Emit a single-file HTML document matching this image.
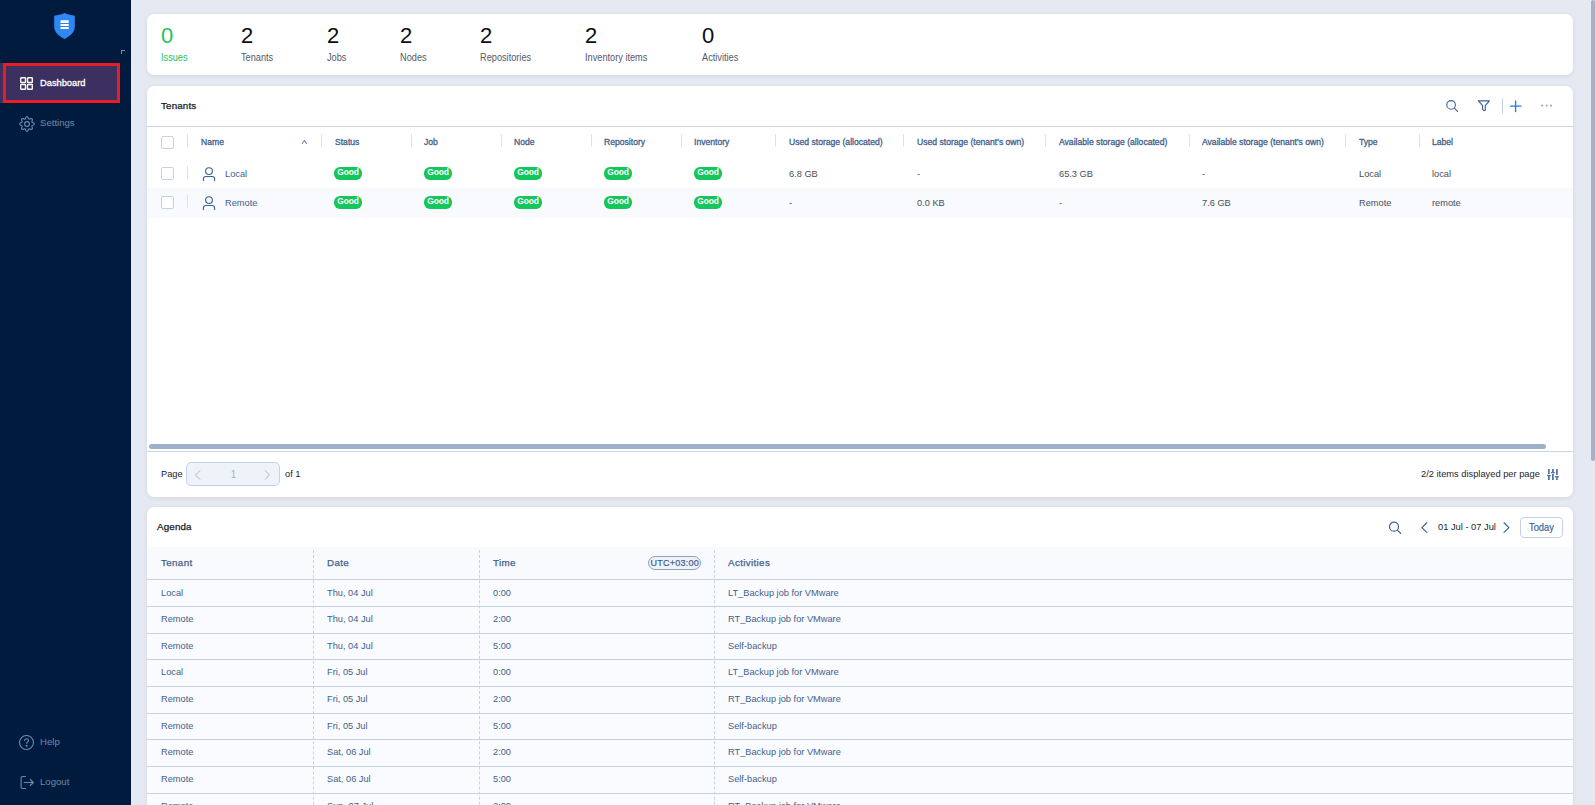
<!DOCTYPE html>
<html><head><meta charset="utf-8">
<style>
*{margin:0;padding:0;box-sizing:border-box}
html,body{width:1595px;height:805px;overflow:hidden;background:#e5e9f1;font-family:"Liberation Sans",sans-serif;position:relative}
.a{position:absolute}
.t{position:absolute;white-space:nowrap;line-height:1}
#side{left:0;top:0;width:131px;height:805px;background:#011b3f}
.card{position:absolute;background:#fff;border-radius:7px;box-shadow:0 1px 4px rgba(30,50,90,0.10)}
.num{font-size:22px;color:#0c0c12}
.lbl{font-size:10px;color:#55596a;transform:scaleX(0.92);transform-origin:0 0}
.hd{font-size:8.6px;color:#43608c;-webkit-text-stroke:0.3px #43608c}
.cell{font-size:9.6px;color:#45608a;transform:scaleX(0.963);transform-origin:0 0}
.cellg{color:#4b4d58}
.cb{position:absolute;width:13px;height:13px;border:1px solid #c6d2e4;border-radius:2px;background:#fff}
.sep{position:absolute;width:1px;height:13px;background:#dbe3ed}
.good{position:absolute;width:28px;height:13px;border-radius:6px;background:#15c65d;color:#fff;font-size:8.4px;font-weight:bold;text-align:center;line-height:11px;letter-spacing:-0.1px}
.dsep{position:absolute;width:0;border-left:1px dashed #c8d3e2}
.ttl{font-size:9.8px;letter-spacing:0.15px;color:#161622;-webkit-text-stroke:0.25px #161622}
</style></head><body>
<div id="side" class="a">
  <svg class="a" style="left:52px;top:11px" width="25" height="30" viewBox="0 0 25 30">
    <path d="M12.5 2 C15.5 3.3 19.5 4.3 22.8 4.8 L22.8 16 C22.8 21.5 17.5 25.5 12.5 28 C7.5 25.5 2.2 21.5 2.2 16 L2.2 4.8 C5.5 4.3 9.5 3.3 12.5 2 Z" fill="#2f86f5"/>
    <rect x="8.5" y="9.2" width="8.2" height="2.8" fill="#fff"/>
    <rect x="8.5" y="13" width="8.2" height="2" fill="#fff"/>
    <rect x="8.5" y="16" width="8.2" height="2" fill="#fff"/>
  </svg>
  <div class="a" style="left:121px;top:50px;width:4px;height:4px;border-top:1.8px solid #6f90c0;border-left:1.8px solid #6f90c0"></div>
  <div class="a" style="left:0;top:63px;width:120px;height:40px;background:#3c3060"></div>
  <div class="a" style="left:3px;top:63px;width:117px;height:40px;border:3px solid #ea1c24"></div>
  <svg class="a" style="left:20px;top:77px" width="13" height="13" viewBox="0 0 13 13" fill="none" stroke="#fff" stroke-width="1.4">
    <rect x="0.7" y="0.7" width="4.8" height="4.8" rx="0.6"/><rect x="7.5" y="0.7" width="4.8" height="4.8" rx="0.6"/>
    <rect x="0.7" y="7.5" width="4.8" height="4.8" rx="0.6"/><rect x="7.5" y="7.5" width="4.8" height="4.8" rx="0.6"/>
  </svg>
  <span class="t" style="left:40px;top:79px;font-size:9.3px;color:#fff;-webkit-text-stroke:0.3px #fff">Dashboard</span>
  <svg class="a" style="left:19px;top:116px" width="16" height="16" viewBox="0 0 16 16" fill="none" stroke="#6a89b3" stroke-width="1.1">
    <path d="M15.3 8.0 L15.2 8.5 L14.7 8.9 L14.2 9.2 L13.6 9.5 L13.1 9.7 L12.9 10.0 L12.9 10.4 L13.0 10.9 L13.2 11.5 L13.4 12.1 L13.4 12.7 L13.2 13.2 L12.7 13.4 L12.1 13.4 L11.5 13.2 L10.9 13.0 L10.4 12.9 L10.0 12.9 L9.7 13.1 L9.5 13.6 L9.2 14.2 L8.9 14.7 L8.5 15.2 L8.0 15.3 L7.5 15.2 L7.1 14.7 L6.8 14.2 L6.5 13.6 L6.3 13.1 L6.0 12.9 L5.6 12.9 L5.1 13.0 L4.5 13.2 L3.9 13.4 L3.3 13.4 L2.8 13.2 L2.6 12.7 L2.6 12.1 L2.8 11.5 L3.0 10.9 L3.1 10.4 L3.1 10.0 L2.9 9.7 L2.4 9.5 L1.8 9.2 L1.3 8.9 L0.8 8.5 L0.7 8.0 L0.8 7.5 L1.3 7.1 L1.8 6.8 L2.4 6.5 L2.9 6.3 L3.1 6.0 L3.1 5.6 L3.0 5.1 L2.8 4.5 L2.6 3.9 L2.6 3.3 L2.8 2.8 L3.3 2.6 L3.9 2.6 L4.5 2.8 L5.1 3.0 L5.6 3.1 L6.0 3.1 L6.3 2.9 L6.5 2.4 L6.8 1.8 L7.1 1.3 L7.5 0.8 L8.0 0.7 L8.5 0.8 L8.9 1.3 L9.2 1.8 L9.5 2.4 L9.7 2.9 L10.0 3.1 L10.4 3.1 L10.9 3.0 L11.5 2.8 L12.1 2.6 L12.7 2.6 L13.2 2.8 L13.4 3.3 L13.4 3.9 L13.2 4.5 L13.0 5.1 L12.9 5.6 L12.9 6.0 L13.1 6.3 L13.6 6.5 L14.2 6.8 L14.7 7.1 L15.2 7.5Z"/>
    <circle cx="8" cy="8" r="2.4"/>
  </svg>
  <span class="t" style="left:40px;top:118px;font-size:9.6px;color:#6f88ab">Settings</span>
  <svg class="a" style="left:19px;top:735px" width="16" height="16" viewBox="0 0 16 16" fill="none" stroke="#6a89b3" stroke-width="1.1">
    <circle cx="7.5" cy="7.5" r="7"/>
    <path d="M5.6 6 C5.6 4.6 6.5 3.8 7.6 3.8 C8.7 3.8 9.5 4.6 9.5 5.6 C9.5 6.9 7.6 7.2 7.6 8.8"/>
    <circle cx="7.6" cy="10.8" r="0.5" fill="#6a89b3"/>
  </svg>
  <span class="t" style="left:40px;top:737px;font-size:9.6px;color:#6f88ab">Help</span>
  <svg class="a" style="left:19px;top:775px" width="16" height="16" viewBox="0 0 16 16" fill="none" stroke="#6a89b3" stroke-width="1.1">
    <path d="M6.5 1.5 H3.6 Q2.1 1.5 2.1 3 V12 Q2.1 13.5 3.6 13.5 H6.5" stroke-linecap="round"/>
    <path d="M5.2 7.5 H14.3 M11.3 4.5 L14.3 7.5 L11.3 10.5" stroke-linecap="round" stroke-linejoin="round"/>
  </svg>
  <span class="t" style="left:40px;top:777px;font-size:9.6px;color:#6f88ab">Logout</span>
</div>
<div class="card" style="left:147px;top:14px;width:1426px;height:61px">
<span class="t num" style="left:14px;top:11px;color:#1fc25e">0</span>
<span class="t lbl" style="left:14px;top:38.6px;color:#1fc25e">Issues</span>
<span class="t num" style="left:94px;top:11px">2</span>
<span class="t lbl" style="left:94px;top:38.6px">Tenants</span>
<span class="t num" style="left:180px;top:11px">2</span>
<span class="t lbl" style="left:180px;top:38.6px">Jobs</span>
<span class="t num" style="left:253px;top:11px">2</span>
<span class="t lbl" style="left:253px;top:38.6px">Nodes</span>
<span class="t num" style="left:333px;top:11px">2</span>
<span class="t lbl" style="left:333px;top:38.6px">Repositories</span>
<span class="t num" style="left:438px;top:11px">2</span>
<span class="t lbl" style="left:438px;top:38.6px">Inventory items</span>
<span class="t num" style="left:555px;top:11px">0</span>
<span class="t lbl" style="left:555px;top:38.6px">Activities</span>
</div>
<div class="card" style="left:147px;top:86px;width:1426px;height:411px;overflow:hidden">
<span class="t ttl" style="left:14px;top:15px">Tenants</span>
<svg class="a" style="left:1297px;top:12px" width="120" height="18" viewBox="0 0 120 18" fill="none" stroke="#3c6298" stroke-width="1.15" stroke-linecap="round" stroke-linejoin="round">
  <circle cx="7.1" cy="6.9" r="4.3"/><path d="M10.3 10.1 L13.5 13.4"/>
  <path d="M34.4 2.8 H45.4 L41.3 7.6 V12.2 L40 12.7 L38.6 11.4 V7.6 Z"/>
  <path d="M58.5 0.5 V15.5" stroke="#c3cfdf" stroke-width="1" stroke-linecap="butt"/>
  <path d="M71.6 2.9 V13.6 M66.5 8.1 H77" stroke="#1f7bf3" stroke-width="1.35"/>
  <circle cx="98.2" cy="7.6" r="1.1" fill="#9aabc2" stroke="none"/><circle cx="102.6" cy="7.6" r="1.1" fill="#9aabc2" stroke="none"/><circle cx="107" cy="7.6" r="1.1" fill="#9aabc2" stroke="none"/>
</svg>
<div class="a" style="left:0;top:40px;width:1426px;height:1px;background:#c8d4e4"></div>
<div class="cb" style="left:14px;top:50px"></div>
<div class="sep" style="left:40px;top:48px"></div>
<div class="sep" style="left:174px;top:48px"></div>
<div class="sep" style="left:264px;top:48px"></div>
<div class="sep" style="left:354px;top:48px"></div>
<div class="sep" style="left:444px;top:48px"></div>
<div class="sep" style="left:534px;top:48px"></div>
<div class="sep" style="left:628px;top:48px"></div>
<div class="sep" style="left:756px;top:48px"></div>
<div class="sep" style="left:898px;top:48px"></div>
<div class="sep" style="left:1042px;top:48px"></div>
<div class="sep" style="left:1198px;top:48px"></div>
<div class="sep" style="left:1272px;top:48px"></div>
<span class="t hd" style="left:54px;top:52px">Name</span>
<span class="t hd" style="left:188px;top:52px">Status</span>
<span class="t hd" style="left:277px;top:52px">Job</span>
<span class="t hd" style="left:367px;top:52px">Node</span>
<span class="t hd" style="left:457px;top:52px">Repository</span>
<span class="t hd" style="left:547px;top:52px">Inventory</span>
<span class="t hd" style="left:642px;top:52px">Used storage (allocated)</span>
<span class="t hd" style="left:770px;top:52px">Used storage (tenant's own)</span>
<span class="t hd" style="left:912px;top:52px">Available storage (allocated)</span>
<span class="t hd" style="left:1055px;top:52px">Available storage (tenant's own)</span>
<span class="t hd" style="left:1212px;top:52px">Type</span>
<span class="t hd" style="left:1285px;top:52px">Label</span>
<svg class="a" style="left:154px;top:53px" width="8" height="6" viewBox="0 0 8 6" fill="none" stroke="#7d95b8" stroke-width="1.1" stroke-linecap="round" stroke-linejoin="round"><path d="M1.2 4.6 L3.4 1.3 L5.6 4.6"/></svg>
<div class="cb" style="left:14px;top:81px"></div>
<div class="sep" style="left:40px;top:80px"></div>
<svg class="a" style="left:55px;top:81px" width="14" height="15" viewBox="0 0 14 15" fill="none" stroke="#3c6298" stroke-width="1.15" stroke-linecap="round"><circle cx="7" cy="4.1" r="3.4"/><path d="M1.4 13.6 V12 Q1.4 9.5 3.9 9.5 H10.1 Q12.6 9.5 12.6 12 V13.6"/></svg>
<span class="t cell" style="left:78px;top:82.6px">Local</span>
<div class="good" style="left:187px;top:81px">Good</div>
<div class="good" style="left:277px;top:81px">Good</div>
<div class="good" style="left:367px;top:81px">Good</div>
<div class="good" style="left:457px;top:81px">Good</div>
<div class="good" style="left:547px;top:81px">Good</div>
<span class="t cell cellg" style="left:642px;top:82.6px">6.8 GB</span>
<span class="t cell cellg" style="left:770px;top:82.6px">-</span>
<span class="t cell cellg" style="left:912px;top:82.6px">65.3 GB</span>
<span class="t cell cellg" style="left:1055px;top:82.6px">-</span>
<span class="t cell cellg" style="left:1212px;top:82.6px">Local</span>
<span class="t cell cellg" style="left:1285px;top:82.6px">local</span>
<div class="a" style="left:0;top:102px;width:1426px;height:30px;background:#f8fafe"></div>
<div class="cb" style="left:14px;top:110px"></div>
<div class="sep" style="left:40px;top:109px"></div>
<svg class="a" style="left:55px;top:110px" width="14" height="15" viewBox="0 0 14 15" fill="none" stroke="#3c6298" stroke-width="1.15" stroke-linecap="round"><circle cx="7" cy="4.1" r="3.4"/><path d="M1.4 13.6 V12 Q1.4 9.5 3.9 9.5 H10.1 Q12.6 9.5 12.6 12 V13.6"/></svg>
<span class="t cell" style="left:78px;top:111.6px">Remote</span>
<div class="good" style="left:187px;top:110px">Good</div>
<div class="good" style="left:277px;top:110px">Good</div>
<div class="good" style="left:367px;top:110px">Good</div>
<div class="good" style="left:457px;top:110px">Good</div>
<div class="good" style="left:547px;top:110px">Good</div>
<span class="t cell cellg" style="left:642px;top:111.6px">-</span>
<span class="t cell cellg" style="left:770px;top:111.6px">0.0 KB</span>
<span class="t cell cellg" style="left:912px;top:111.6px">-</span>
<span class="t cell cellg" style="left:1055px;top:111.6px">7.6 GB</span>
<span class="t cell cellg" style="left:1212px;top:111.6px">Remote</span>
<span class="t cell cellg" style="left:1285px;top:111.6px">remote</span>
<div class="a" style="left:2px;top:358px;width:1397px;height:5px;background:#9fb1c9;border-radius:3px"></div>
<div class="a" style="left:0;top:365px;width:1426px;height:1px;background:#c8d4e4"></div>
<span class="t" style="left:14px;top:384px;font-size:9.3px;color:#23232f">Page</span>
<div class="a" style="left:39px;top:376px;width:94px;height:24px;border:1px solid #c5d3ea;border-radius:5px;background:#eef2f9"></div>
<svg class="a" style="left:47px;top:383px" width="80" height="12" viewBox="0 0 80 12" fill="none" stroke="#a9b5c7" stroke-width="1"><path d="M6 1.5 L1.5 6 L6 10.5"/><path d="M71 1.5 L75.5 6 L71 10.5"/></svg>
<span class="t" style="left:83.5px;top:383px;font-size:10.5px;color:#a3afc0;transform:scaleX(0.85);transform-origin:0 0">1</span>
<span class="t" style="left:138px;top:384px;font-size:9.3px;color:#23232f">of 1</span>
<span class="t" style="left:1274px;top:384px;font-size:9.3px;color:#23232f">2/2 items displayed per page</span>
<svg class="a" style="left:1399px;top:382px" width="14" height="14" viewBox="0 0 14 14" fill="#5877a3">
<rect x="2" y="1" width="1.8" height="5"/><rect x="1" y="6.8" width="3.8" height="1.4"/><rect x="2" y="8" width="1.8" height="4"/>
<rect x="6" y="1" width="1.8" height="3.4"/><rect x="5" y="4" width="3.8" height="1.4"/><rect x="6" y="6" width="1.8" height="6"/>
<rect x="10" y="1" width="1.8" height="6"/><rect x="9" y="8" width="3.8" height="1.4"/><rect x="10" y="9.2" width="1.8" height="2.8"/>
</svg>
</div>
<div class="card" style="left:147px;top:507px;width:1426px;height:330px;overflow:hidden">
<span class="t ttl" style="left:10px;top:15px">Agenda</span>
<svg class="a" style="left:1240px;top:14px" width="16" height="16" viewBox="0 0 16 16" fill="none" stroke="#3c6298" stroke-width="1.2" stroke-linecap="round"><circle cx="7" cy="5.7" r="4.5"/><path d="M10.3 9.1 L13.6 12.3"/></svg>
<svg class="a" style="left:1273px;top:14px" width="92" height="14" viewBox="0 0 92 14" fill="none" stroke="#3c6298" stroke-width="1.2" stroke-linecap="round" stroke-linejoin="round"><path d="M6.8 1.8 L1.9 6.6 L6.8 11.4"/><path d="M84 1.8 L88.9 6.6 L84 11.4"/></svg>
<span class="t" style="left:1291px;top:16px;font-size:9.3px;color:#22222e">01 Jul - 07 Jul</span>
<div class="a" style="left:1373px;top:10px;width:43px;height:21px;border:1px solid #c4d2e8;border-radius:4px"></div>
<span class="t" style="left:1382px;top:15.5px;font-size:10px;color:#3a5f94;-webkit-text-stroke:0.2px #3a5f94;transform:scaleX(0.93);transform-origin:0 0">Today</span>
<div class="a" style="left:0;top:40px;width:1426px;height:33px;background:#f8fafd;border-radius:6px 6px 0 0"></div>
<div class="a" style="left:0;top:72px;width:1426px;height:1px;background:#c3d1e3"></div>
<span class="t" style="left:14px;top:51px;font-size:9.8px;letter-spacing:0.35px;color:#43608c;-webkit-text-stroke:0.25px #43608c">Tenant</span>
<span class="t" style="left:180px;top:51px;font-size:9.8px;letter-spacing:0.35px;color:#43608c;-webkit-text-stroke:0.25px #43608c">Date</span>
<span class="t" style="left:346px;top:51px;font-size:9.8px;letter-spacing:0.35px;color:#43608c;-webkit-text-stroke:0.25px #43608c">Time</span>
<span class="t" style="left:581px;top:51px;font-size:9.8px;letter-spacing:0.35px;color:#43608c;-webkit-text-stroke:0.25px #43608c">Activities</span>
<div class="a" style="left:501px;top:49px;width:53px;height:14px;border:1px solid #8ca3c2;border-radius:7px;background:#eff3f9"></div>
<span class="t" style="left:503.5px;top:52px;font-size:9px;letter-spacing:0.25px;color:#3a5a8c;-webkit-text-stroke:0.2px #3a5a8c">UTC+03:00</span>
<div class="dsep" style="left:166px;top:43px;height:300px"></div>
<div class="dsep" style="left:332px;top:43px;height:300px"></div>
<div class="dsep" style="left:567px;top:43px;height:300px"></div>
<div class="a" style="left:0;top:73px;width:1426px;height:260px;background:#fafbfe"></div>
<div class="a" style="left:0;top:99px;width:1426px;height:1px;background:#c3d1e3"></div>
<span class="t cell" style="left:14px;top:80.50px">Local</span>
<span class="t cell" style="left:180px;top:80.50px">Thu, 04 Jul</span>
<span class="t cell" style="left:346px;top:80.50px">0:00</span>
<span class="t cell" style="left:581px;top:80.50px">LT_Backup job for VMware</span>
<div class="a" style="left:0;top:126px;width:1426px;height:1px;background:#c3d1e3"></div>
<span class="t cell" style="left:14px;top:106.60px">Remote</span>
<span class="t cell" style="left:180px;top:106.60px">Thu, 04 Jul</span>
<span class="t cell" style="left:346px;top:106.60px">2:00</span>
<span class="t cell" style="left:581px;top:106.60px">RT_Backup job for VMware</span>
<div class="a" style="left:0;top:152px;width:1426px;height:1px;background:#c3d1e3"></div>
<span class="t cell" style="left:14px;top:133.60px">Remote</span>
<span class="t cell" style="left:180px;top:133.60px">Thu, 04 Jul</span>
<span class="t cell" style="left:346px;top:133.60px">5:00</span>
<span class="t cell" style="left:581px;top:133.60px">Self-backup</span>
<div class="a" style="left:0;top:179px;width:1426px;height:1px;background:#c3d1e3"></div>
<span class="t cell" style="left:14px;top:159.60px">Local</span>
<span class="t cell" style="left:180px;top:159.60px">Fri, 05 Jul</span>
<span class="t cell" style="left:346px;top:159.60px">0:00</span>
<span class="t cell" style="left:581px;top:159.60px">LT_Backup job for VMware</span>
<div class="a" style="left:0;top:206px;width:1426px;height:1px;background:#c3d1e3"></div>
<span class="t cell" style="left:14px;top:186.60px">Remote</span>
<span class="t cell" style="left:180px;top:186.60px">Fri, 05 Jul</span>
<span class="t cell" style="left:346px;top:186.60px">2:00</span>
<span class="t cell" style="left:581px;top:186.60px">RT_Backup job for VMware</span>
<div class="a" style="left:0;top:232px;width:1426px;height:1px;background:#c3d1e3"></div>
<span class="t cell" style="left:14px;top:213.60px">Remote</span>
<span class="t cell" style="left:180px;top:213.60px">Fri, 05 Jul</span>
<span class="t cell" style="left:346px;top:213.60px">5:00</span>
<span class="t cell" style="left:581px;top:213.60px">Self-backup</span>
<div class="a" style="left:0;top:259px;width:1426px;height:1px;background:#c3d1e3"></div>
<span class="t cell" style="left:14px;top:239.60px">Remote</span>
<span class="t cell" style="left:180px;top:239.60px">Sat, 06 Jul</span>
<span class="t cell" style="left:346px;top:239.60px">2:00</span>
<span class="t cell" style="left:581px;top:239.60px">RT_Backup job for VMware</span>
<div class="a" style="left:0;top:286px;width:1426px;height:1px;background:#c3d1e3"></div>
<span class="t cell" style="left:14px;top:266.60px">Remote</span>
<span class="t cell" style="left:180px;top:266.60px">Sat, 06 Jul</span>
<span class="t cell" style="left:346px;top:266.60px">5:00</span>
<span class="t cell" style="left:581px;top:266.60px">Self-backup</span>
<div class="a" style="left:0;top:313px;width:1426px;height:1px;background:#c3d1e3"></div>
<span class="t cell" style="left:14px;top:293.60px">Remote</span>
<span class="t cell" style="left:180px;top:293.60px">Sun, 07 Jul</span>
<span class="t cell" style="left:346px;top:293.60px">2:00</span>
<span class="t cell" style="left:581px;top:293.60px">RT_Backup job for VMware</span>
<div class="dsep" style="left:166px;top:43px;height:300px"></div>
<div class="dsep" style="left:332px;top:43px;height:300px"></div>
<div class="dsep" style="left:567px;top:43px;height:300px"></div>
</div>
<div class="a" style="left:1591px;top:0;width:4px;height:461px;background:#a0b2cc;border-radius:2px"></div>
</body></html>
